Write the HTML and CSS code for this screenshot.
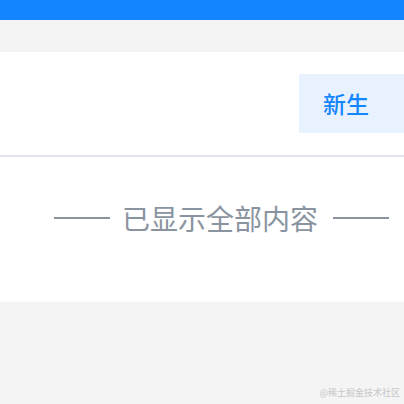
FILE: index.html
```html
<!DOCTYPE html>
<html lang="zh-CN">
<head>
  <meta charset="UTF-8" />
  <meta name="viewport" content="width=device-width, initial-scale=1.0"/>
  <title>已显示全部内容</title>
  <link rel="stylesheet" href="styles.css">
</head>
<body>
  <div class="topbar"></div>
  <div class="gap"></div>
  <div class="panel">
    <div class="row">
      <div class="tag">新生</div>
    </div>
    <div class="end">
      <span class="line"></span>
      <span class="end-text">已显示全部内容</span>
      <span class="line"></span>
    </div>
  </div>
  <div class="footer">
    <span class="mark">@稀土掘金技术社区</span>
  </div>
</body>
</html>
```

FILE: styles.css
```css
* {
  box-sizing: border-box;
}

body {
  margin: 0;
  width: 404px;
  height: 404px;
  overflow: hidden;
  background: #f3f4f3;
  font-family: "Noto Sans CJK SC", "Noto Sans", sans-serif;
  display: flex;
  flex-direction: column;
}

.topbar {
  height: 20px;
  background: #1385ff;
}

.gap {
  height: 32px;
}

.panel {
  background: #fff;
  height: 250px;
}

.row {
  height: 105px;
  padding-top: 22px;
  border-bottom: 2px solid #e5e4ea;
  display: flex;
  justify-content: flex-end;
}

.tag {
  width: 105px;
  height: 59px;
  background: #e8f2fe;
  color: #1385ff;
  font-size: 23px;
  font-weight: 500;
  line-height: 59px;
  padding-left: 24px;
}

.end {
  display: flex;
  align-items: center;
  padding: 46px 0 0 54px;
  color: #8a94a0;
}

.line {
  width: 56px;
  height: 1.5px;
  background: #8a94a0;
}

.end-text {
  font-size: 28px;
  line-height: 30px;
  margin: 0 15px 0 12px;
}

.footer {
  flex: 1;
  display: flex;
  justify-content: flex-end;
  align-items: flex-end;
  padding: 0 4px 5px 0;
}

.mark {
  font-size: 9px;
  color: #c4c6c8;
}
```
